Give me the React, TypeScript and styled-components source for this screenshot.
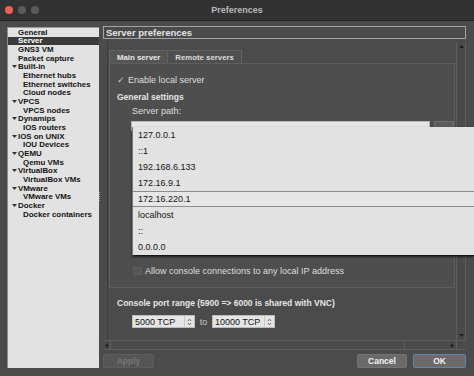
import React from 'react';
import styled, { createGlobalStyle } from 'styled-components';

const GlobalStyle = createGlobalStyle`
  html, body {
    margin: 0;
    background: #4b4b4b;
  }
  body {
    font-family: "Liberation Sans", Arial, sans-serif;
  }
`;

const Window = styled.div`
  position: relative;
  width: 474px;
  height: 376px;
  display: flex;
  flex-direction: column;
  overflow: hidden;
  background: #4b4b4b;
`;

const TitleBar = styled.div`
  height: 20px;
  display: grid;
  grid-template-columns: 1fr auto 1fr;
  align-items: center;
  background: #323232;
  border-bottom: 1px solid #262626;
`;

const Lights = styled.div`
  display: flex;
  gap: 5px;
  padding-left: 5px;
`;

const Light = styled.span<{ $color: string }>`
  width: 8px;
  height: 8px;
  border-radius: 50%;
  background: ${(p) => p.$color};
`;

const Title = styled.div`
  font-size: 9px;
  font-weight: bold;
  color: #b9b9b9;
`;

const Body = styled.div`
  flex: 1;
  display: flex;
  padding: 5px 8px 8px 7px;
  min-height: 0;
`;

const Sidebar = styled.div`
  width: 92px;
  margin-top: 1px;
  background: #e2e2e2;
  border-left: 1px solid #8e8e8e;
  border-top: 1px solid #9a9a9a;
  box-sizing: border-box;
  display: flex;
  flex-direction: column;
`;

const TreeRow = styled.div<{ $level: number; $selected?: boolean }>`
  height: 8.66px;
  display: flex;
  align-items: center;
  padding-left: ${(p) => (p.$level === 2 ? 15 : 2)}px;
  font-size: 7.9px;
  font-weight: bold;
  color: ${(p) => (p.$selected ? '#ffffff' : '#141414')};
  background: ${(p) => (p.$selected ? '#3a3a3a' : 'transparent')};
  white-space: nowrap;
`;

const Arrow = styled.span`
  width: 8px;
  display: flex;
  justify-content: center;
`;

const Splitter = styled.div`
  width: 4px;
  display: flex;
  align-items: center;
  justify-content: flex-start;
`;

const Grip = styled.div`
  width: 1px;
  height: 10px;
  background: repeating-linear-gradient(#9a9a9a 0 1px, transparent 1px 2px);
`;

const Main = styled.div`
  flex: 1;
  display: flex;
  flex-direction: column;
  min-width: 0;
`;

const Header = styled.div`
  height: 13px;
  box-sizing: border-box;
  border: 1px solid #a3a3a3;
  padding-left: 2px;
  font-size: 9.5px;
  font-weight: bold;
  line-height: 11px;
  color: #e4e4e4;
`;

const ScrollArea = styled.div`
  margin-top: 3px;
  height: 308px;
  display: flex;
  flex-direction: column;
  padding-left: 4px;
`;

const Viewport = styled.div`
  flex: 1;
  display: flex;
  border-left: 1px solid #3c3c3c;
  min-height: 0;
`;

const Content = styled.div`
  flex: 1;
  padding: 8px 1px 0 1px;
  display: flex;
  flex-direction: column;
`;

const Tabs = styled.div`
  height: 13px;
  display: flex;
`;

const Tab = styled.div<{ $active?: boolean }>`
  height: 13px;
  box-sizing: border-box;
  padding: 0 7px;
  display: flex;
  align-items: center;
  font-size: 7.8px;
  font-weight: bold;
  color: ${(p) => (p.$active ? '#e8e8e8' : '#dcdcdc')};
  background: ${(p) => (p.$active ? '#555555' : '#4f4f4f')};
  border: 1px solid #626262;
  border-bottom: none;
  margin-left: ${(p) => (p.$active ? 0 : -1)}px;
`;

const TabPane = styled.div`
  height: 225px;
  box-sizing: border-box;
  border: 1px solid #5e5e5e;
  background: #4e4e4e;
  padding: 0 0 0 7px;
  display: flex;
  flex-direction: column;
`;

const Row = styled.div<{ $top?: number; $indent?: number; $h?: number }>`
  height: ${(p) => p.$h ?? 14}px;
  margin-top: ${(p) => p.$top ?? 0}px;
  padding-left: ${(p) => p.$indent ?? 0}px;
  display: flex;
  align-items: center;
  font-size: 9px;
  color: #dedede;
  white-space: nowrap;
`;

const Check = styled.span`
  width: 11px;
  font-size: 9px;
  color: #cfcfcf;
`;

const Bold = styled.span`
  font-size: 8.5px;
  font-weight: bold;
  color: #e6e6e6;
`;

const PathInput = styled.div`
  flex: 1;
  height: 10px;
  background: #e6e6e6;
  border: 1px solid #b5b5b5;
  box-sizing: border-box;
`;

const BrowseButton = styled.div`
  width: 20px;
  height: 10px;
  margin-left: 4px;
  box-sizing: border-box;
  background: #5c5c5c;
  border: 1px solid #6c6c6c;
`;

const Spacer = styled.div<{ $h: number }>`
  height: ${(p) => p.$h}px;
  flex-shrink: 0;
`;

const CheckBox = styled.span`
  width: 9px;
  height: 8px;
  margin-right: 3px;
  box-sizing: border-box;
  background: #575757;
  border: 1px solid #5f5f5f;
  border-radius: 1px;
`;

const SpinRow = styled.div`
  height: 13px;
  margin-top: 5px;
  padding-left: 23px;
  display: flex;
  align-items: center;
`;

const SpinBox = styled.div`
  width: 63px;
  height: 13px;
  display: flex;
  background: #e5e5e5;
  border: 1px solid #bdbdbd;
  box-sizing: border-box;
`;

const SpinText = styled.div`
  flex: 1;
  padding-left: 2px;
  display: flex;
  align-items: center;
  font-size: 9px;
  color: #161616;
`;

const SpinArrows = styled.div`
  width: 9px;
  display: flex;
  align-items: center;
  justify-content: center;
  border-left: 1px solid #c8c8c8;
`;

const To = styled.span`
  width: 17px;
  text-align: center;
  font-size: 9px;
  color: #c4c4c4;
`;

const VScroll = styled.div`
  width: 10px;
  display: flex;
  flex-direction: column;
  border-left: 1px solid #5d5d5d;
  border-right: 1px solid #5d5d5d;
  box-sizing: border-box;
  background: #4a4a4a;
`;

const ScrollTrack = styled.div`
  flex: 1;
`;

const ScrollButton = styled.div`
  height: 9px;
  display: flex;
  align-items: center;
  justify-content: center;
`;

const HScroll = styled.div`
  height: 10px;
  display: flex;
  margin-left: -4px;
  border-top: 1px solid #5d5d5d;
  border-bottom: 1px solid #5d5d5d;
  box-sizing: border-box;
`;

const HButton = styled.div`
  width: 7px;
  display: flex;
  align-items: center;
  justify-content: center;
  border-right: 1px solid #5d5d5d;
`;

const HTrack = styled.div`
  flex: 1;
  border-right: 1px solid #5d5d5d;
  margin-right: 44px;
`;

const HCorner = styled.div`
  width: 9px;
`;

const ButtonRow = styled.div`
  height: 14px;
  margin-top: 4px;
  display: flex;
  gap: 6px;
`;

const Button = styled.div<{ $disabled?: boolean; $default?: boolean; $width: number }>`
  width: ${(p) => p.$width}px;
  height: 14px;
  box-sizing: border-box;
  display: flex;
  align-items: center;
  justify-content: center;
  font-size: 8.5px;
  font-weight: bold;
  border-radius: 2px;
  color: ${(p) => (p.$disabled ? '#767676' : '#f2f2f2')};
  background: ${(p) => (p.$disabled ? '#555555' : '#6a6a6a')};
  border: 1px solid ${(p) => (p.$default ? '#6485ad' : p.$disabled ? '#5d5d5d' : '#747474')};
`;

const Grow = styled.div`
  flex: 1;
`;

const Popup = styled.div`
  position: absolute;
  left: 132px;
  top: 127px;
  width: 341px;
  display: flex;
  flex-direction: column;
  background: #e2e2e2;
  border-left: 1px solid #777777;
  border-bottom: 1px solid #161616;
  box-shadow: 0 1px 2px rgba(0, 0, 0, 0.6);
`;

const PopupItem = styled.div<{ $current?: boolean }>`
  height: 16px;
  box-sizing: border-box;
  padding-left: 5px;
  display: flex;
  align-items: center;
  font-size: 9px;
  color: #151515;
  background: ${(p) => (p.$current ? '#e6e6e6' : 'transparent')};
  border-top: 1px solid ${(p) => (p.$current ? '#8c8c8c' : 'transparent')};
  border-bottom: 1px solid ${(p) => (p.$current ? '#8c8c8c' : 'transparent')};
`;

const tree: { label: string; level: number; parent?: boolean; selected?: boolean }[] = [
  { label: 'General', level: 1 },
  { label: 'Server', level: 1, selected: true },
  { label: 'GNS3 VM', level: 1 },
  { label: 'Packet capture', level: 1 },
  { label: 'Built-in', level: 1, parent: true },
  { label: 'Ethernet hubs', level: 2 },
  { label: 'Ethernet switches', level: 2 },
  { label: 'Cloud nodes', level: 2 },
  { label: 'VPCS', level: 1, parent: true },
  { label: 'VPCS nodes', level: 2 },
  { label: 'Dynamips', level: 1, parent: true },
  { label: 'IOS routers', level: 2 },
  { label: 'IOS on UNIX', level: 1, parent: true },
  { label: 'IOU Devices', level: 2 },
  { label: 'QEMU', level: 1, parent: true },
  { label: 'Qemu VMs', level: 2 },
  { label: 'VirtualBox', level: 1, parent: true },
  { label: 'VirtualBox VMs', level: 2 },
  { label: 'VMware', level: 1, parent: true },
  { label: 'VMware VMs', level: 2 },
  { label: 'Docker', level: 1, parent: true },
  { label: 'Docker containers', level: 2 },
];

const hosts = [
  '127.0.0.1',
  '::1',
  '192.168.6.133',
  '172.16.9.1',
  '172.16.220.1',
  'localhost',
  '::',
  '0.0.0.0',
];

const Triangle = ({ dir, color = '#222' }: { dir: 'down' | 'up' | 'left' | 'right'; color?: string }) => {
  const pts = {
    down: '0,0 5,0 2.5,3',
    up: '0,3 5,3 2.5,0',
    left: '3,0 3,5 0,2.5',
    right: '0,0 0,5 3,2.5',
  }[dir];
  const w = dir === 'down' || dir === 'up' ? 5 : 3;
  const h = dir === 'down' || dir === 'up' ? 3 : 5;
  return (
    <svg width={w} height={h} viewBox={`0 0 ${w} ${h}`}>
      <polygon points={pts} fill={color} />
    </svg>
  );
};

const Spinner = () => (
  <SpinArrows>
    <svg width="5" height="8" viewBox="0 0 5 8">
      <polyline points="0.8,3 2.5,1.2 4.2,3" fill="none" stroke="#555" strokeWidth="0.9" />
      <polyline points="0.8,5 2.5,6.8 4.2,5" fill="none" stroke="#555" strokeWidth="0.9" />
    </svg>
  </SpinArrows>
);

export default function App() {
  return (
    <Window>
      <GlobalStyle />
      <TitleBar>
        <Lights>
          <Light $color="#ec5f56" />
          <Light $color="#5b5b5b" />
          <Light $color="#5b5b5b" />
        </Lights>
        <Title>Preferences</Title>
        <div />
      </TitleBar>
      <Body>
        <Sidebar>
          {tree.map((item) => (
            <TreeRow key={item.label} $level={item.level} $selected={item.selected}>
              {item.level === 1 && (
                <Arrow>{item.parent && <Triangle dir="down" color="#333" />}</Arrow>
              )}
              {item.label}
            </TreeRow>
          ))}
        </Sidebar>
        <Splitter>
          <Grip />
        </Splitter>
        <Main>
          <Header>Server preferences</Header>
          <ScrollArea>
            <Viewport>
              <Content>
                <Tabs>
                  <Tab $active>Main server</Tab>
                  <Tab>Remote servers</Tab>
                </Tabs>
                <TabPane>
                  <Row $top={9}>
                    <Check>✓</Check>
                    Enable local server
                  </Row>
                  <Row $top={3}>
                    <Bold>General settings</Bold>
                  </Row>
                  <Row $indent={15}>Server path:</Row>
                  <Row $top={3} $h={10} $indent={14}>
                    <PathInput />
                    <BrowseButton />
                  </Row>
                  <Spacer $h={133} />
                  <Row $indent={16}>
                    <CheckBox />
                    Allow console connections to any local IP address
                  </Row>
                </TabPane>
                <Row $top={8} $indent={8}>
                  <Bold>Console port range (5900 =&gt; 6000 is shared with VNC)</Bold>
                </Row>
                <SpinRow>
                  <SpinBox>
                    <SpinText>5000 TCP</SpinText>
                    <Spinner />
                  </SpinBox>
                  <To>to</To>
                  <SpinBox>
                    <SpinText>10000 TCP</SpinText>
                    <Spinner />
                  </SpinBox>
                </SpinRow>
              </Content>
              <VScroll>
                <ScrollButton>
                  <Triangle dir="up" color="#1e1e1e" />
                </ScrollButton>
                <ScrollTrack />
                <ScrollButton>
                  <Triangle dir="down" color="#1e1e1e" />
                </ScrollButton>
              </VScroll>
            </Viewport>
            <HScroll>
              <HButton>
                <Triangle dir="left" color="#1e1e1e" />
              </HButton>
              <HTrack />
              <HButton>
                <Triangle dir="right" color="#1e1e1e" />
              </HButton>
              <HCorner />
            </HScroll>
          </ScrollArea>
          <ButtonRow>
            <Button $disabled $width={51}>
              Apply
            </Button>
            <Grow />
            <Button $width={50}>Cancel</Button>
            <Button $default $width={53}>
              OK
            </Button>
          </ButtonRow>
        </Main>
      </Body>
      <Popup>
        {hosts.map((h) => (
          <PopupItem key={h} $current={h === '172.16.220.1'}>
            {h}
          </PopupItem>
        ))}
      </Popup>
    </Window>
  );
}
